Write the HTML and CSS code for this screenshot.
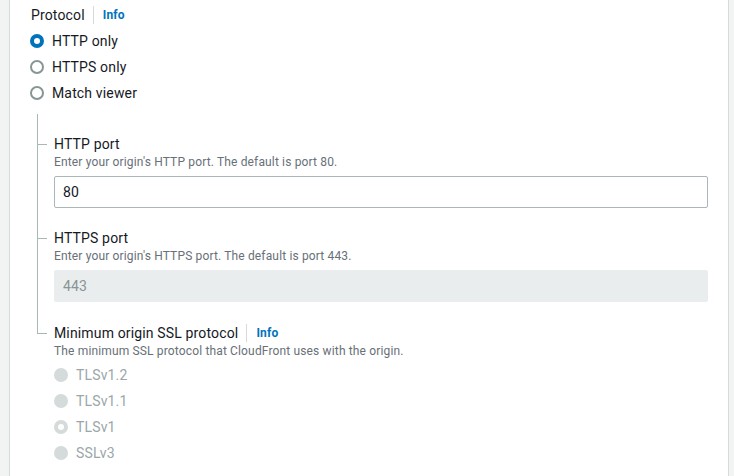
FILE: index.html
```html
<!DOCTYPE html>
<html>
<head>
<meta charset="utf-8">
<link rel="stylesheet" href="styles.css">
</head>
<body>
<div class="page">
  <div class="panel">
    <div class="label-row">
      <span class="label">Protocol</span>
      <span class="sep"></span>
      <a class="info">Info</a>
    </div>
    <div class="radios">
      <div class="radio-row"><span class="radio checked"></span><span>HTTP only</span></div>
      <div class="radio-row"><span class="radio"></span><span>HTTPS only</span></div>
      <div class="radio-row"><span class="radio"></span><span>Match viewer</span></div>
    </div>
    <div class="tree">
      <div class="tree-item">
        <div class="label-row"><span class="label">HTTP port</span></div>
        <div class="desc">Enter your origin's HTTP port. The default is port 80.</div>
        <div class="input">80</div>
      </div>
      <div class="tree-item">
        <div class="label-row"><span class="label">HTTPS port</span></div>
        <div class="desc">Enter your origin's HTTPS port. The default is port 443.</div>
        <div class="input disabled">443</div>
      </div>
      <div class="tree-item last">
        <div class="label-row">
          <span class="label">Minimum origin SSL protocol</span>
          <span class="sep"></span>
          <a class="info">Info</a>
        </div>
        <div class="desc">The minimum SSL protocol that CloudFront uses with the origin.</div>
        <div class="radios sub">
          <div class="radio-row dis"><span class="radio"></span><span>TLSv1.2</span></div>
          <div class="radio-row dis"><span class="radio"></span><span>TLSv1.1</span></div>
          <div class="radio-row dis"><span class="radio checked"></span><span>TLSv1</span></div>
          <div class="radio-row dis"><span class="radio"></span><span>SSLv3</span></div>
        </div>
      </div>
    </div>
  </div>
</div>
</body>
</html>
```
FILE: styles.css
```css
html, body {
  margin: 0;
  padding: 0;
  height: 100%;
  background: #f2f3f3;
  font-family: Roboto, "Open Sans", sans-serif;
  color: #16191f;
  font-size: 14px;
  letter-spacing: 0.15px;
}
.page {
  padding: 0 5px 0 9px;
  height: 100%;
  box-sizing: border-box;
}
.panel {
  background: #fff;
  border-left: 1px solid #d5dbdb;
  border-right: 1px solid #d5dbdb;
  padding: 5px 20px 0 20px;
  height: 100%;
  box-sizing: border-box;
}
.label-row {
  display: flex;
  align-items: center;
  height: 20px;
  line-height: 20px;
}
.label {
  font-size: 14px;
  padding-left: 1px;
}
.sep {
  width: 1px;
  height: 18px;
  background: #d5dbdb;
  margin: 0 9px 0 8px;
}
.info {
  color: #0073bb;
  font-weight: 700;
  font-size: 12px;
}
.radios {
  margin-top: 3px;
}
.radio-row {
  display: flex;
  align-items: center;
  height: 26px;
  gap: 8px;
}
.radio {
  width: 14px;
  height: 14px;
  box-sizing: border-box;
  border: 2px solid #879596;
  border-radius: 50%;
  background: #fff;
}
.radio.checked {
  border: 4px solid #0073bb;
}
.radio-row.dis {
  color: #9aa7a8;
}
.radio-row.dis .radio {
  border: none;
  background: #d5dbdb;
}
.radio-row.dis .radio.checked {
  border: 4px solid #d5dbdb;
  background: #fff;
}
.tree {
  margin-top: 8px;
  margin-left: 7px;
}
.tree-item {
  position: relative;
  border-left: 1px solid #aab7b8;
  padding: 20px 0 0 16px;
}
.tree-item::before {
  content: "";
  position: absolute;
  left: 0;
  top: 30px;
  width: 9px;
  border-top: 1px solid #aab7b8;
}
.tree-item.last {
  border-left-color: transparent;
  padding-top: 21px;
}
.tree-item.last::before {
  left: -1px;
  top: 0;
  height: 31px;
  width: 9px;
  border-top: none;
  border-left: 1px solid #aab7b8;
  border-bottom: 1px solid #aab7b8;
}
.tree-item .label {
  padding-left: 0;
}
.desc {
  font-size: 12px;
  line-height: 16px;
  color: #687078;
}
.input {
  margin-top: 6px;
  height: 32px;
  box-sizing: border-box;
  border: 1px solid #aab7b8;
  border-radius: 2px;
  padding-left: 8px;
  display: flex;
  align-items: center;
  font-size: 14px;
}
.input.disabled {
  background: #eaeded;
  border-color: #eaeded;
  color: #879596;
}
.radios.sub {
  margin-top: 3px;
}
```
